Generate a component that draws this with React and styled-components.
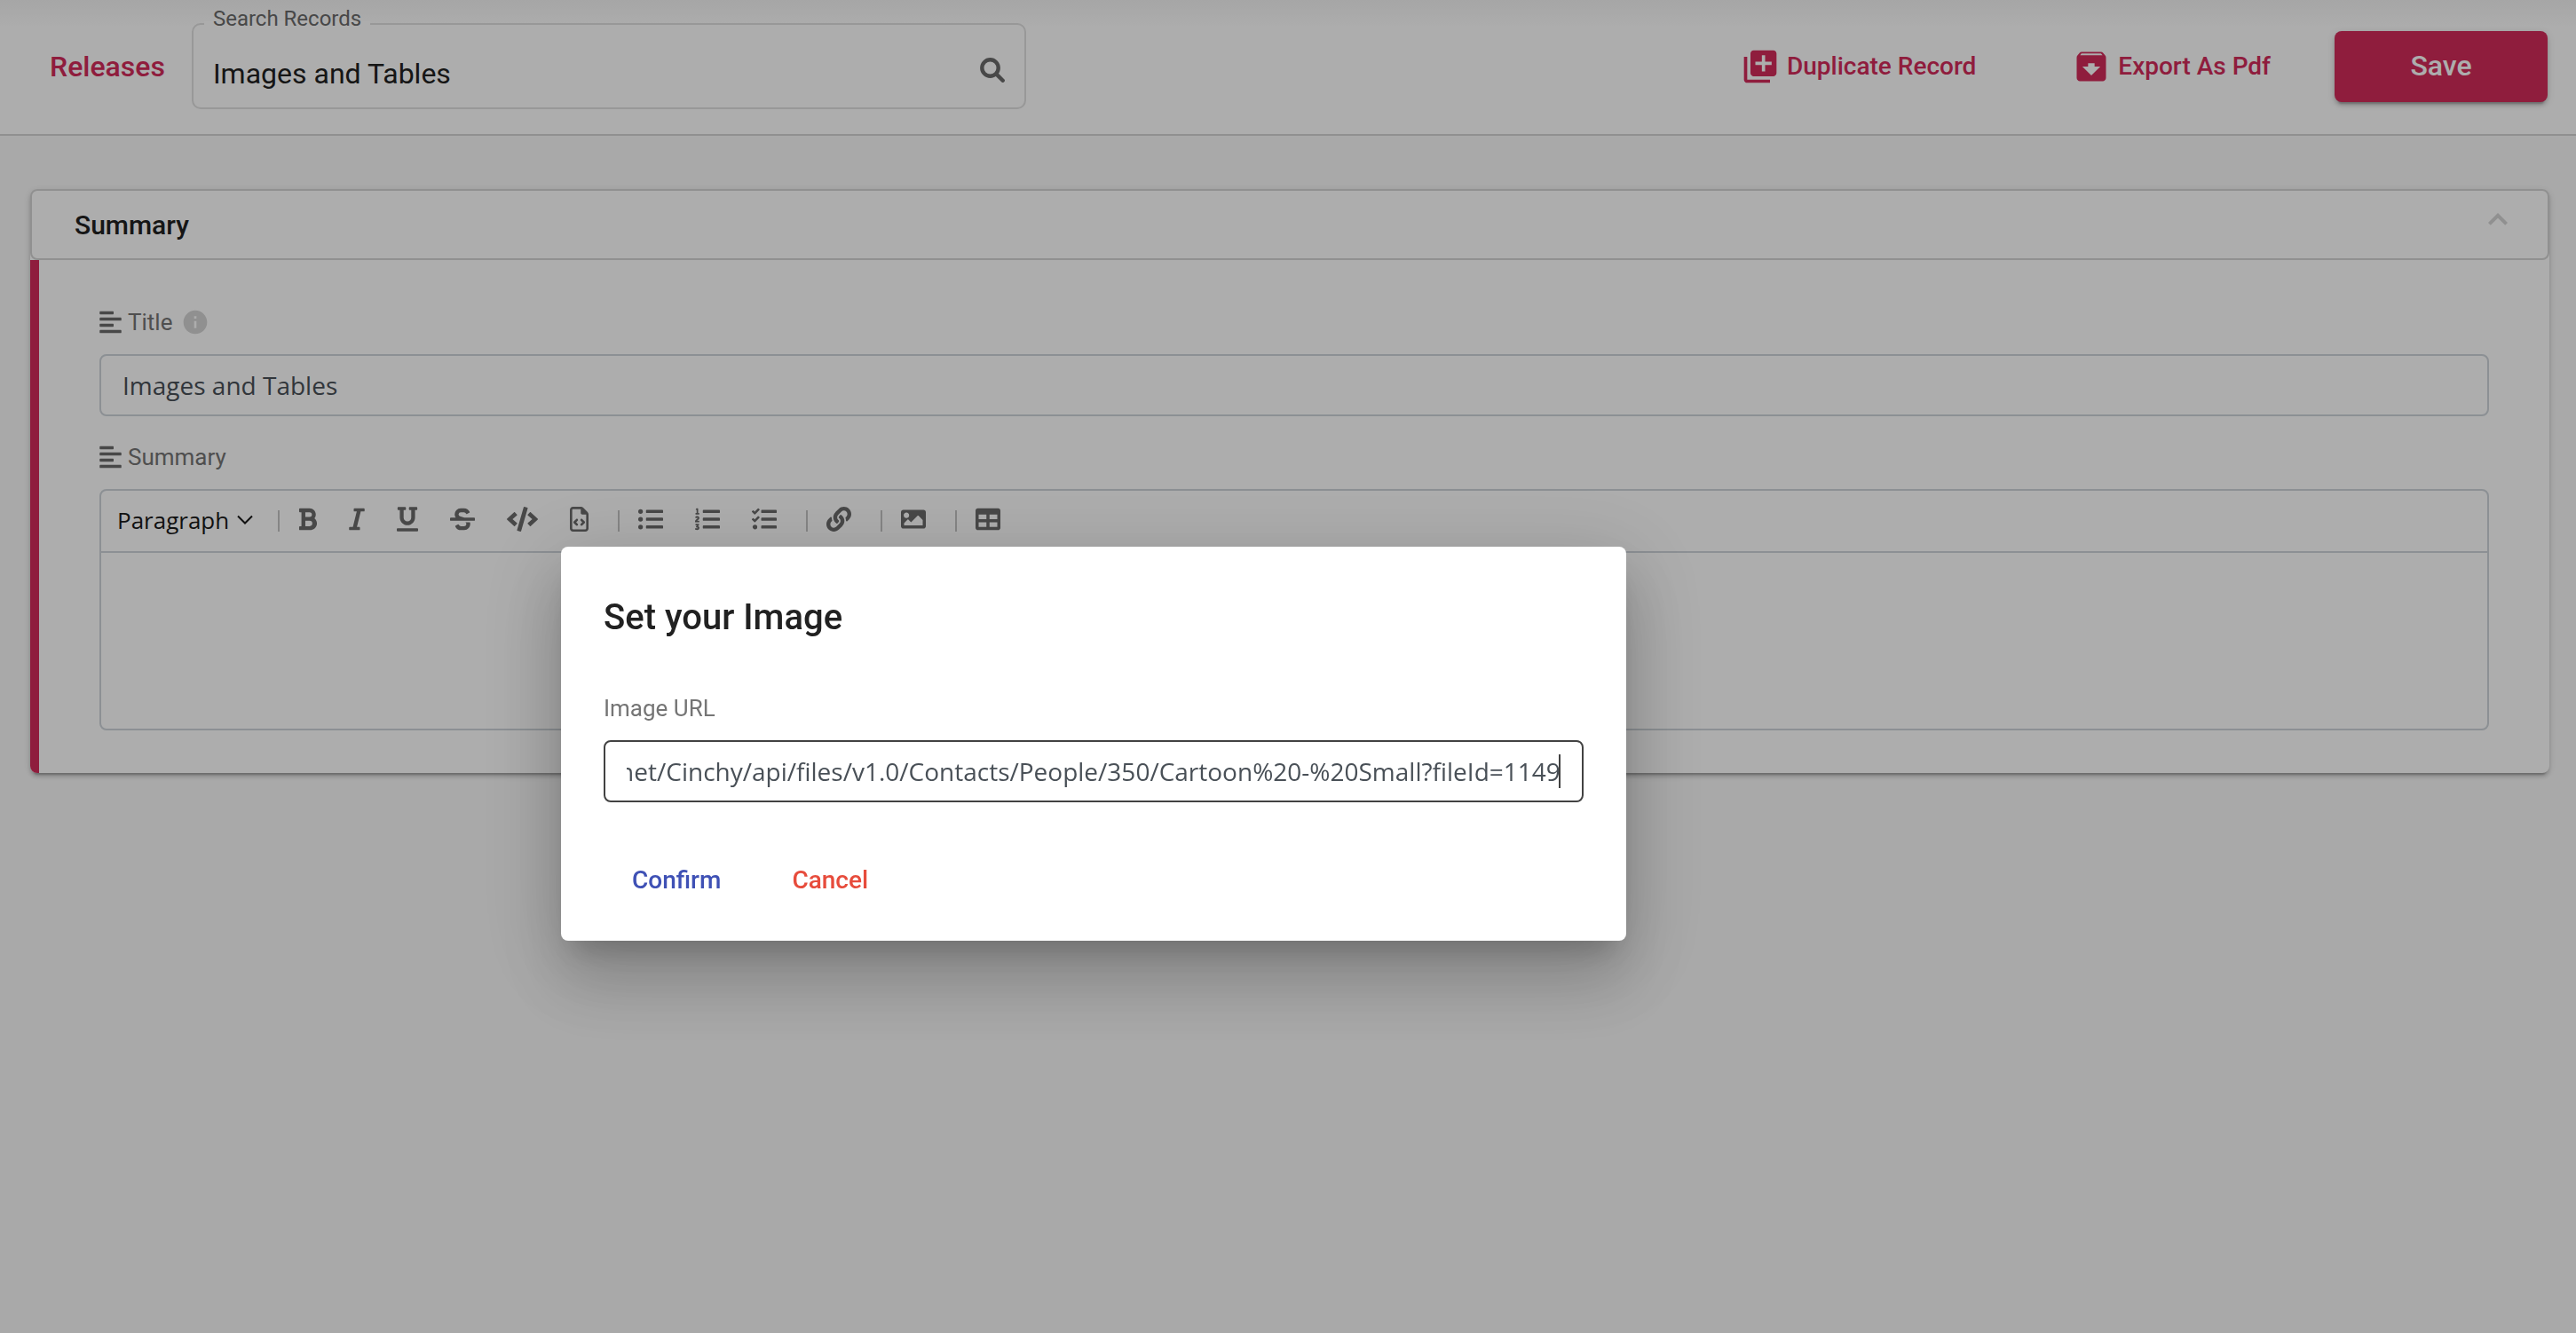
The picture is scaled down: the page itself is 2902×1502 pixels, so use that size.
import React, { useLayoutEffect, useRef } from "react";
import styled, { createGlobalStyle } from "styled-components";
import {
  FaAlignLeft,
  FaBold,
  FaCode,
  FaImage,
  FaItalic,
  FaLink,
  FaListOl,
  FaListUl,
  FaStrikethrough,
  FaTable,
  FaTasks,
  FaUnderline,
} from "react-icons/fa";
import { FaRegFileCode } from "react-icons/fa6";
import { MdArchive, MdInfo, MdLibraryAdd } from "react-icons/md";

const color = {
  accent: "#d32c5b",
  line: "#d4d4d4",
  field: "#ced4da",
  icon: "#6a6a6a",
  muted: "#757575",
  text: "#212121",
  value: "#495057",
};

const roboto = `Roboto, "Liberation Sans", sans-serif`;
const openSans = `"Open Sans", "Noto Sans", sans-serif`;

const GlobalStyle = createGlobalStyle`
  *, *::before, *::after { box-sizing: border-box; }
  body {
    margin: 0;
    background: #fafafa;
    color: ${color.text};
    font-family: ${roboto};
  }
  button, input, select, textarea { font: inherit; color: inherit; margin: 0; }
  h1, h2 { margin: 0; }
`;

const Page = styled.div`
  min-height: 100vh;
  background: #fafafa;
`;

const TopBar = styled.header`
  display: flex;
  align-items: center;
  gap: 30px;
  padding: 26px 32px 28px 56px;
  border-bottom: 2px solid ${color.line};
  background: linear-gradient(#f5f5f5, #ffffff 30px);
`;

const TableLink = styled.a`
  color: ${color.accent};
  font-size: 32px;
  font-weight: 500;
  text-decoration: none;
`;

const SearchField = styled.div`
  position: relative;
  display: flex;
  align-items: center;
  width: 940px;
  height: 97px;
  padding: 8px 22px 0;
  border: 2px solid #e0e0e0;
  border-radius: 10px;
`;

const FloatingLabel = styled.label`
  position: absolute;
  top: -21px;
  left: 12px;
  padding: 0 10px;
  background: linear-gradient(transparent 60%, #ffffff 60%);
  color: #6a6a6a;
  font-size: 24px;
  line-height: 28px;
`;

const SearchInput = styled.input`
  flex: 1;
  min-width: 0;
  padding: 8px 0 0;
  border: 0;
  outline: 0;
  background: transparent;
  font-size: 32px;
  line-height: 40px;
`;

const SearchButton = styled.button`
  display: flex;
  padding: 0;
  border: 0;
  background: none;
  color: ${color.icon};
`;

const Actions = styled.div`
  display: flex;
  align-items: center;
  gap: 36px;
  margin-left: auto;
`;

const ActionButton = styled.button`
  display: flex;
  align-items: center;
  gap: 8px;
  padding: 0 36px;
  border: 0;
  background: none;
  color: ${color.accent};
  font-size: 28px;
  font-weight: 500;
  svg {
    width: 44px;
    height: 44px;
  }
`;

const SaveButton = styled.button`
  width: 240px;
  height: 80px;
  padding: 0 0 2px;
  border: 0;
  border-radius: 8px;
  background: ${color.accent};
  color: #ffffff;
  font-size: 32px;
  font-weight: 500;
  box-shadow: 0 6px 2px -4px rgba(0, 0, 0, 0.2), 0 4px 4px rgba(0, 0, 0, 0.14),
    0 2px 10px rgba(0, 0, 0, 0.12);
`;

const Card = styled.section`
  margin: 60px 30px 0 34px;
  border-radius: 8px;
  background: #ffffff;
  box-shadow: 0 6px 2px -4px rgba(0, 0, 0, 0.2), 0 4px 4px rgba(0, 0, 0, 0.14),
    0 2px 10px rgba(0, 0, 0, 0.12);
`;

const CardHeader = styled.button`
  display: flex;
  align-items: center;
  justify-content: space-between;
  width: 100%;
  height: 80px;
  padding: 0 45px 0 48px;
  border: 2px solid ${color.line};
  border-radius: 8px;
  background: #ffffff;
  font-size: 30px;
  font-weight: 500;
  svg {
    margin-bottom: 12px;
  }
`;

const CardBody = styled.div`
  display: flex;
  flex-direction: column;
  gap: 32px;
  padding: 56px 68px 48px;
  border-left: 10px solid ${color.accent};
  border-radius: 0 0 8px 8px;
`;

const Field = styled.div`
  display: flex;
  flex-direction: column;
  gap: 22px;
`;

const FieldLabel = styled.div`
  display: flex;
  align-items: center;
  height: 28px;
  color: ${color.muted};
  font-size: 26px;
`;

const LabelIcon = styled(FaAlignLeft)`
  width: 25px;
  height: 28px;
  margin-right: 7px;
  color: ${color.icon};
`;

const InfoIcon = styled(MdInfo)`
  width: 32px;
  height: 32px;
  margin-left: 10px;
  color: #d4d4d4;
`;

const TextInput = styled.input`
  width: 100%;
  height: 70px;
  padding: 0 24px;
  border: 2px solid ${(p) => (p.$active ? "#424242" : color.field)};
  border-radius: 8px;
  outline: 0;
  background: #ffffff;
  color: ${color.value};
  font-family: ${openSans};
  font-size: 28px;
`;

const Editor = styled.div`
  border: 2px solid ${color.field};
  border-radius: 8px;
`;

const Toolbar = styled.div`
  display: flex;
  align-items: center;
  height: 70px;
  padding-left: 18px;
  border-bottom: 2px solid ${color.field};
`;

const StylePicker = styled.div`
  display: flex;
  align-items: center;
  gap: 8px;
  margin-right: 13px;
  padding-bottom: 2px;
`;

const StyleSelect = styled.select`
  appearance: none;
  padding: 0;
  border: 0;
  background: none;
  color: #1a1a1a;
  font-family: ${openSans};
  font-size: 26px;
`;

const Divider = styled.span`
  width: 2px;
  height: 24px;
  margin: 0 3px 0 15px;
  background: #c4c4c4;
`;

const ToolButton = styled.button`
  display: flex;
  padding: 0 18px 4px;
  border: 0;
  background: none;
  color: ${color.icon};
  svg {
    width: ${(p) => p.$width}px;
    height: 28px;
  }
`;

const EditorArea = styled.textarea`
  display: block;
  width: 100%;
  height: 198px;
  padding: 24px;
  border: 0;
  outline: 0;
  resize: none;
  background: transparent;
  font-family: ${openSans};
  font-size: 28px;
`;

const Backdrop = styled.div`
  position: fixed;
  inset: 0;
  display: flex;
  align-items: flex-start;
  padding: 616px 32px 0 632px;
  background: rgba(0, 0, 0, 0.32);
`;

const Dialog = styled.form`
  display: flex;
  flex-direction: column;
  width: 1200px;
  padding: 48px 48px 33px;
  border-radius: 8px;
  background: #ffffff;
  box-shadow: 0 22px 30px -14px rgba(0, 0, 0, 0.2),
    0 48px 76px 6px rgba(0, 0, 0, 0.14), 0 18px 92px 16px rgba(0, 0, 0, 0.12);
`;

const DialogTitle = styled.h2`
  font-size: 40px;
  font-weight: 500;
  line-height: 64px;
`;

const DialogLabel = styled.label`
  margin: 55px 0 21px;
  color: ${color.muted};
  font-size: 26px;
  line-height: 30px;
`;

const CaretField = styled.div`
  position: relative;
`;

const Caret = styled.span`
  position: absolute;
  top: 16px;
  right: 26px;
  width: 2px;
  height: 38px;
  background: #424242;
`;

const DialogActions = styled.div`
  display: flex;
  gap: 16px;
  margin-top: 51px;
`;

const DialogButton = styled.button`
  height: 72px;
  padding: 0 32px;
  border: 0;
  background: none;
  color: ${(p) => (p.$danger ? "#e74c3c" : "#3f51b5")};
  font-size: 28px;
  font-weight: 500;
`;

const toolGroups = [
  [
    { name: "Bold", Icon: FaBold, width: 21 },
    { name: "Italic", Icon: FaItalic, width: 18 },
    { name: "Underline", Icon: FaUnderline, width: 24 },
    { name: "Strikethrough", Icon: FaStrikethrough, width: 28 },
    { name: "Code", Icon: FaCode, width: 35 },
    { name: "Code block", Icon: FaRegFileCode, width: 21 },
  ],
  [
    { name: "Bulleted list", Icon: FaListUl, width: 28 },
    { name: "Numbered list", Icon: FaListOl, width: 28 },
    { name: "Task list", Icon: FaTasks, width: 28 },
  ],
  [{ name: "Link", Icon: FaLink, width: 28 }],
  [{ name: "Image", Icon: FaImage, width: 28 }],
  [{ name: "Table", Icon: FaTable, width: 28 }],
];

function SearchIcon() {
  return (
    <svg width="28" height="28" viewBox="0 0 28 28" fill="none" stroke="currentColor" strokeWidth="4.4" strokeLinecap="round">
      <circle cx="11.5" cy="11.5" r="9.2" />
      <path d="M18.6 18.6L25.7 25.7" />
    </svg>
  );
}

function CollapseIcon() {
  return (
    <svg width="22" height="14" viewBox="0 0 22 14" fill="none" stroke="#d4d4d4" strokeWidth="4">
      <path d="M1.4 12.4L11 2.8L20.6 12.4" />
    </svg>
  );
}

function SelectArrow() {
  return (
    <svg width="18" height="12" viewBox="0 0 18 12" fill="none" stroke="#1a1a1a" strokeWidth="2">
      <path d="M1 1.5L9 9.5L17 1.5" />
    </svg>
  );
}

function ImageDialog() {
  const input = useRef(null);

  // Keep the end of a long address in view.
  useLayoutEffect(() => {
    input.current.scrollLeft = input.current.scrollWidth;
  }, []);

  return (
    <Backdrop>
      <Dialog role="dialog" aria-labelledby="image-title" onSubmit={(e) => e.preventDefault()}>
        <DialogTitle id="image-title">Set your Image</DialogTitle>
        <DialogLabel htmlFor="image-url">Image URL</DialogLabel>
        <CaretField>
          <TextInput
            id="image-url"
            ref={input}
            $active
            defaultValue="https://cinchy.net/Cinchy/api/files/v1.0/Contacts/People/350/Cartoon%20-%20Small?fileId=1149"
          />
          <Caret />
        </CaretField>
        <DialogActions>
          <DialogButton type="submit">Confirm</DialogButton>
          <DialogButton type="button" $danger>
            Cancel
          </DialogButton>
        </DialogActions>
      </Dialog>
    </Backdrop>
  );
}

export default function App() {
  return (
    <Page>
      <GlobalStyle />
      <TopBar>
        <TableLink href="#releases">Releases</TableLink>
        <SearchField>
          <FloatingLabel htmlFor="search">Search Records</FloatingLabel>
          <SearchInput id="search" defaultValue="Images and Tables" />
          <SearchButton aria-label="Search">
            <SearchIcon />
          </SearchButton>
        </SearchField>
        <Actions>
          <ActionButton>
            <MdLibraryAdd />
            Duplicate Record
          </ActionButton>
          <ActionButton>
            <MdArchive />
            Export As Pdf
          </ActionButton>
          <SaveButton>Save</SaveButton>
        </Actions>
      </TopBar>

      <main>
        <Card>
          <CardHeader aria-expanded="true">
            Summary
            <CollapseIcon />
          </CardHeader>
          <CardBody>
            <Field>
              <FieldLabel>
                <LabelIcon />
                <label htmlFor="title">Title</label>
                <InfoIcon />
              </FieldLabel>
              <TextInput id="title" defaultValue="Images and Tables" />
            </Field>
            <Field>
              <FieldLabel>
                <LabelIcon />
                <label htmlFor="summary">Summary</label>
              </FieldLabel>
              <Editor>
                <Toolbar>
                  <StylePicker>
                    <StyleSelect aria-label="Text style">
                      <option>Paragraph</option>
                    </StyleSelect>
                    <SelectArrow />
                  </StylePicker>
                  {toolGroups.map((group, i) => (
                    <React.Fragment key={i}>
                      <Divider />
                      {group.map(({ name, Icon, width }) => (
                        <ToolButton key={name} aria-label={name} $width={width}>
                          <Icon />
                        </ToolButton>
                      ))}
                    </React.Fragment>
                  ))}
                </Toolbar>
                <EditorArea id="summary" />
              </Editor>
            </Field>
          </CardBody>
        </Card>
      </main>

      <ImageDialog />
    </Page>
  );
}
